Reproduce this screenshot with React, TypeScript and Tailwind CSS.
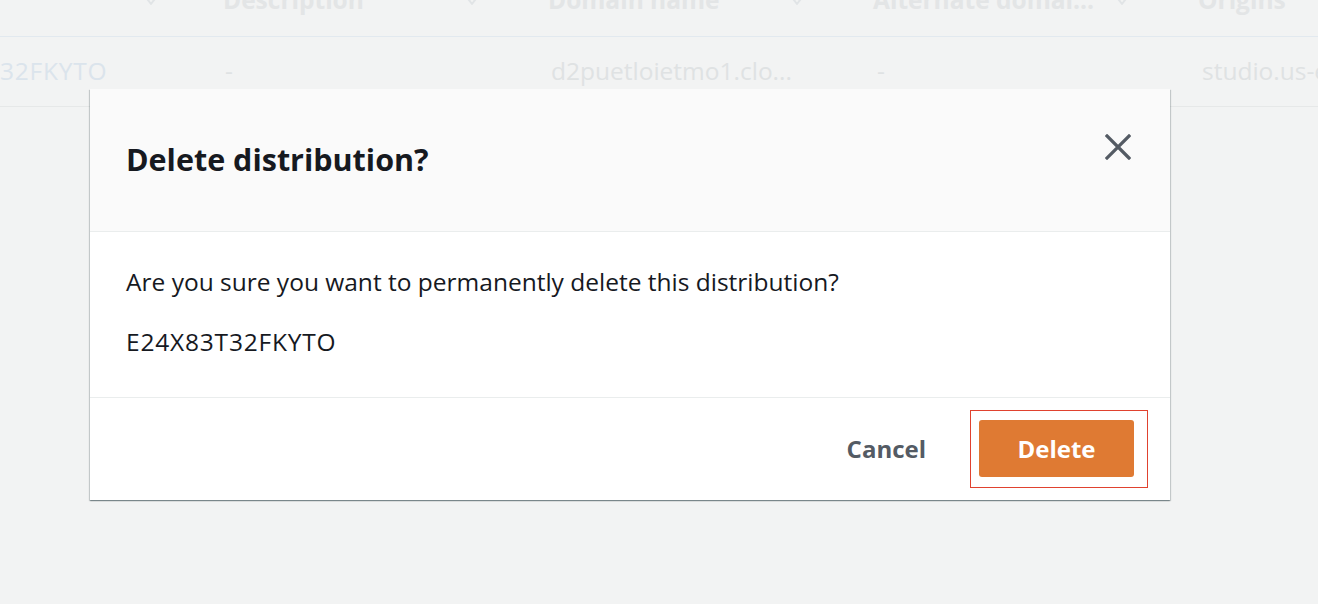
const font = { fontFamily: '"Open Sans", "Noto Sans", Arial, sans-serif' };

function Chevron() {
  return (
    <svg width="16" height="14" viewBox="0 0 16 14" className="text-[#e1e4e6]">
      <path d="M2 3h12L8 11z" fill="none" stroke="currentColor" strokeWidth="2" strokeLinejoin="round" />
    </svg>
  );
}

function HeaderCell({ label }: { label: string }) {
  return (
    <div className="flex w-[325px] shrink-0 items-center justify-between pr-[68px]">
      <span className="whitespace-nowrap">{label}</span>
      <Chevron />
    </div>
  );
}

export default function App() {
  return (
    <div className="relative h-[604px] w-[1318px] overflow-hidden bg-[#f2f3f3]" style={font}>
      {/* faded table behind the modal */}
      <div className="-mt-[36px]">
        <div className="flex h-[73px] items-center border-b border-[#e2e9ef] pl-[223px] text-[24.5px] font-bold text-[#e3e5e6]">
          <div className="-ml-[223px] flex w-[223px] shrink-0 justify-end pr-[64px]">
            <Chevron />
          </div>
          <HeaderCell label="Description" />
          <HeaderCell label="Domain name" />
          <HeaderCell label="Alternate domai..." />
          <span>Origins</span>
        </div>
        <div className="flex h-[70px] items-center border-b border-[#e6e8e8] text-[24.5px] text-[#dfe2e3]">
          <span className="-ml-[103px] w-[328px] shrink-0 whitespace-nowrap tracking-[0.8px] text-[#dbe4ec]">E24X83T32FKYTO</span>
          <span className="w-[326px] shrink-0">-</span>
          <span className="w-[326px] shrink-0 whitespace-nowrap">d2puetloietmo1.clo...</span>
          <span className="w-[325px] shrink-0">-</span>
          <span className="whitespace-nowrap">studio.us-east-1.amazonaws.com</span>
        </div>
      </div>

      {/* modal */}
      <div className="absolute left-[90px] top-[89px] w-[1080px] bg-white shadow-[0_1px_1px_0_rgba(0,28,36,0.3),1px_1px_1px_0_rgba(0,28,36,0.15),-1px_1px_1px_0_rgba(0,28,36,0.15)]">
        <div className="flex h-[143px] items-center justify-between border-b border-[#eaeded] bg-[#fafafa] pl-[36px] pr-[39px]">
          <h2 className="text-[30.5px] font-bold text-[#16191f]">Delete distribution?</h2>
          <svg width="26" height="26" viewBox="0 0 26 26" className="mb-[26px] text-[#545b64]">
            <path d="M2 2L24 24M24 2L2 24" stroke="currentColor" strokeWidth="3.2" strokeLinecap="square" />
          </svg>
        </div>
        <div className="flex h-[166px] flex-col border-b border-[#eaeded] pl-[36px] pt-[34px] text-[24.5px] text-[#16191f]">
          <p className="leading-[32px]">Are you sure you want to permanently delete this distribution?</p>
          <p className="mt-[28px] leading-[32px] tracking-[0.8px]">E24X83T32FKYTO</p>
        </div>
        <div className="flex h-[102px] items-center justify-end pr-[22px]">
          <button className="mr-[44px] text-[24px] font-bold text-[#545b64]">Cancel</button>
          <div className="border border-[#e0422f] pb-[10px] pl-[8px] pr-[13px] pt-[9px]">
            <button className="h-[57px] w-[155px] rounded-[3px] bg-[#df7a33] pt-[1px] text-[24px] font-bold text-white">
              Delete
            </button>
          </div>
        </div>
      </div>
    </div>
  );
}
